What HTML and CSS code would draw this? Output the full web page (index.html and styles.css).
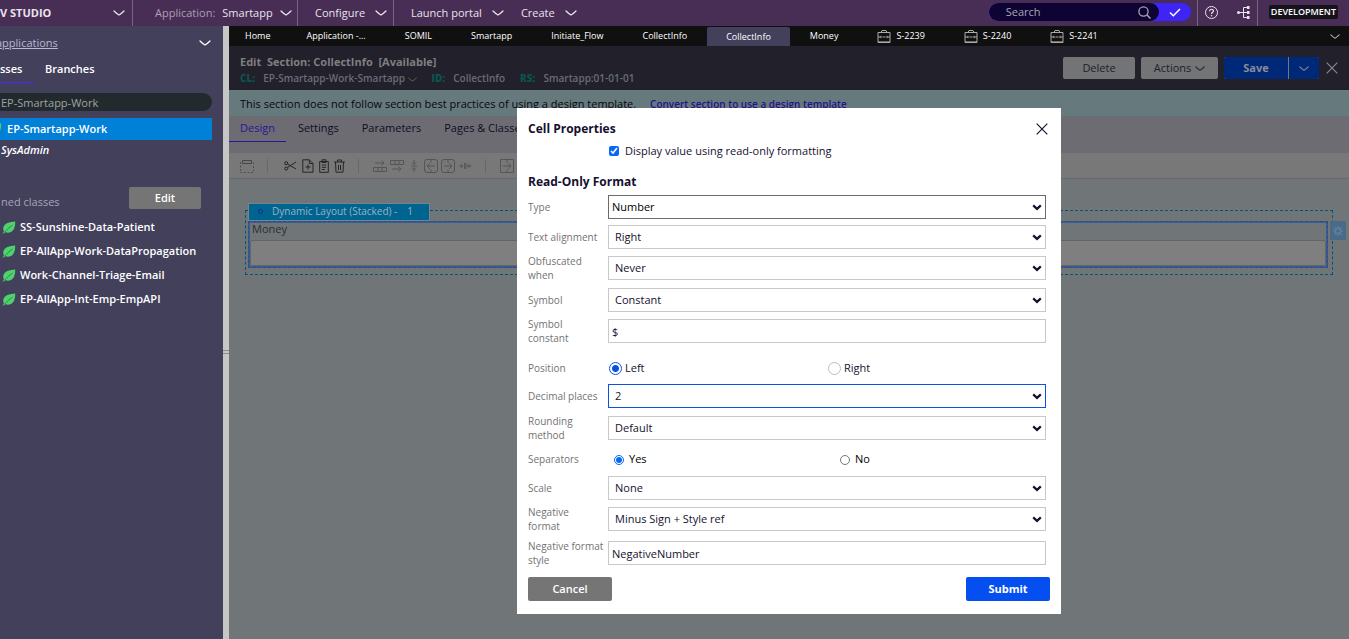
FILE: index.html
```html
<!DOCTYPE html>
<html lang="en">
<head>
<meta charset="utf-8">
<title>Dev Studio</title>
<link rel="stylesheet" href="styles.css">
</head>
<body>
<svg class="sprite" aria-hidden="true">
  <symbol id="chev" viewBox="0 0 12 6"><path d="M1 1c2 2 3 3 5 4c2-1 3-2 5-4" fill="none" stroke="currentColor" stroke-width="1.3" stroke-linecap="round"/></symbol>
  <symbol id="arrow" viewBox="0 0 10 7"><path d="M1.2 1.4L5 4.9l3.8-3.5" fill="none" stroke="currentColor" stroke-width="2.2"/></symbol>
  <symbol id="cross" viewBox="0 0 12 12"><path d="M.7.7l10.600 10.600M11.300.7L.7 11.300" fill="none" stroke="currentColor" stroke-width="1.2"/></symbol>
  <symbol id="case" viewBox="0 0 14 14"><path d="M1 3.500h12v10H1zM4 3.500l1-2h4l1 2M1 8h3m1.500 0h3M10 8h3M4 6.800v2.400M10 6.800v2.400" fill="none" stroke="currentColor"/><path d="M1 12h12v1.500H1z" fill="currentColor" opacity=".6"/></symbol>
  <symbol id="leaf" viewBox="0 0 14 13"><path d="M13.200.5C8 .8 1.500 2 1.200 7.500c0 1.300.3 2.200.8 3L.5 12.500l1-.1L3 11.300c6 1.800 10.500-1.500 10.200-10.800z" fill="#4fd16c"/><path d="M2.500 11.300C5 8.500 7.500 6 10.500 4" fill="none" stroke="#2e7d50" stroke-width=".9"/></symbol>
</svg>
<header class="top">
  <button class="studio">V STUDIO<svg class="chev"><use href="#chev"/></svg></button>
  <button class="app"><span class="muted">Application:</span>Smartapp<svg class="chev"><use href="#chev"/></svg></button>
  <nav class="menu">
    <button class="conf">Configure<svg class="chev"><use href="#chev"/></svg></button>
    <button>Launch portal<svg class="chev"><use href="#chev"/></svg></button>
    <button>Create<svg class="chev"><use href="#chev"/></svg></button>
  </nav>
  <form class="search">
    <label class="field"><input type="text" placeholder="Search" aria-label="Search">
      <svg width="13" height="13" viewBox="0 0 13 13"><circle cx="5.500" cy="5.500" r="4.600" fill="none" stroke="currentColor" stroke-width="1.300"/><path d="M9 9l3.500 3.500" stroke="currentColor" stroke-width="1.500"/></svg></label>
    <button type="button" aria-label="Go"><svg width="12" height="9" viewBox="0 0 12 9"><path d="M1 4.500l3.300 3.300L11 1" fill="none" stroke="#fff" stroke-width="1.500"/></svg></button>
  </form>
  <div class="tools">
    <button aria-label="Help"><svg width="13" height="13" viewBox="0 0 13 13"><g fill="none" stroke="currentColor"><circle cx="6.500" cy="6.500" r="6"/><path d="M4.600 5.200c.1-2.700 3.900-2.500 3.800-.2 0 1.300-1.900 1.400-1.900 3" stroke-width="1.200"/></g><circle cx="6.500" cy="9.700" r=".8" fill="currentColor"/></svg></button>
    <button aria-label="Hierarchy"><svg width="13" height="13" viewBox="0 0 13 13"><path d="M1 6.500h10M11 1.500H6.500v10H11" fill="none" stroke="currentColor"/><g fill="currentColor"><circle cx="1.500" cy="6.500" r="1.500"/><path d="M10 0h2.500v3H10zM10 5h2.500v3H10zM10 10h2.500v3H10z"/></g></svg></button>
  </div>
  <div class="env"><span>DEVELOPMENT</span></div>
</header>
<div class="body">
  <aside class="side">
    <div class="apps"><a href="#">applications</a><svg class="chev"><use href="#chev"/></svg></div>
    <nav class="sidetabs"><a href="#" class="on">sses</a><a href="#">Branches</a></nav>
    <input class="find" type="text" value="EP-Smartapp-Work" aria-label="Find class">
    <a href="#" class="current"><span class="cutleaf"><svg class="leaf"><use href="#leaf"/></svg></span>EP-Smartapp-Work</a>
    <a href="#" class="sys">SysAdmin</a>
    <div class="pinned"><span>ned classes</span><button>Edit</button></div>
    <ul class="classes">
      <li><svg class="leaf"><use href="#leaf"/></svg><a href="#">SS-Sunshine-Data-Patient</a></li>
      <li><svg class="leaf"><use href="#leaf"/></svg><a href="#">EP-AllApp-Work-DataPropagation</a></li>
      <li><svg class="leaf"><use href="#leaf"/></svg><a href="#">Work-Channel-Triage-Email</a></li>
      <li><svg class="leaf"><use href="#leaf"/></svg><a href="#">EP-AllApp-Int-Emp-EmpAPI</a></li>
    </ul>
  </aside>
  <div class="split"><i></i></div>
  <main class="main">
    <nav class="tabs">
      <a href="#">Home</a><a href="#">Application -...</a><a href="#">SOMIL</a><a href="#">Smartapp</a><a href="#">Initiate_Flow</a><a href="#">CollectInfo</a><a href="#" class="on">CollectInfo</a><a href="#">Money</a>
      <a href="#"><svg class="case"><use href="#case"/></svg>S-2239</a>
      <a href="#"><svg class="case"><use href="#case"/></svg>S-2240</a>
      <a href="#"><svg class="case"><use href="#case"/></svg>S-2241</a>
      <button aria-label="More tabs"><svg class="chev small"><use href="#chev"/></svg></button>
    </nav>
    <section class="head">
      <div>
        <h1>Edit&nbsp; Section: CollectInfo&nbsp; <span>[Available]</span></h1>
        <p class="meta"><b>CL:</b><span>EP-Smartapp-Work-Smartapp <svg class="chev tiny"><use href="#chev"/></svg></span><b>ID:</b><span>CollectInfo</span><b>RS:</b><span>Smartapp:01-01-01</span></p>
      </div>
      <div class="actions">
        <button>Delete</button>
        <button class="wide">Actions<svg class="chev small"><use href="#chev"/></svg></button>
        <div class="save"><button>Save</button><button class="more" aria-label="More save options"><svg class="chev small"><use href="#chev"/></svg></button></div>
        <button class="x" aria-label="Close"><svg class="cross"><use href="#cross"/></svg></button>
      </div>
    </section>
    <p class="banner">This section does not follow section best practices of using a design template. <a href="#">Convert section to use a design template</a></p>
    <nav class="subtabs"><a href="#" class="on">Design</a><a href="#">Settings</a><a href="#">Parameters</a><a href="#">Pages &amp; Classes</a></nav>
    <div class="bar">
      <div class="set"><svg width="14" height="14" viewBox="0 0 14 14"><path d="M2.500 1.500h9v3h-9z" fill="none" stroke="#454545"/><path d="M.5 3v10.500h13V3" fill="none" stroke="#505050" stroke-dasharray="2 1.500"/></svg></div>
      <div class="set dark">
        <svg width="13" height="14" viewBox="0 0 13 14"><g fill="none" stroke="currentColor"><path d="M12 3L3.500 8.500M12 10L3.500 5"/><circle cx="2.200" cy="4.200" r="1.500"/><circle cx="2.200" cy="9.500" r="1.500"/></g></svg>
        <svg width="12" height="14" viewBox="0 0 12 14"><path d="M.8.8h6.500l3.700 3.700v8.700H.8zM7.300.8v3.700H11M3.500 8h5M6 5.500v5" fill="none" stroke="currentColor"/></svg>
        <svg width="10" height="14" viewBox="0 0 10 14"><path d="M.7 2.500h8.600v10.800H.7zM3 .8h4v2.700H3zM2.800 6h4.400M2.800 8.300h4.400M2.800 10.500h3" fill="none" stroke="currentColor"/></svg>
        <svg width="11" height="14" viewBox="0 0 11 14"><path d="M0 3h11M3.500 3V1h4v2M1.500 3l.5 10.200h7L9.500 3M4.500 6v5M6.500 6v5" fill="none" stroke="currentColor"/></svg>
      </div>
      <div class="set">
        <svg width="14" height="14" viewBox="0 0 14 14"><path d="M2 4h9M8.500 1.500L11 4 8.500 6.500M.5 8.500h13v4H.5zM5 8.500v4M9 8.500v4" fill="none" stroke="currentColor"/></svg>
        <svg width="14" height="14" viewBox="0 0 14 14"><path d="M.5 1.500h13v4H.5zM5 1.500v4M9 1.500v4M2 10h9M8.500 7.500L11 10l-2.500 2.500" fill="none" stroke="currentColor"/></svg>
        <svg width="14" height="14" viewBox="0 0 14 14"><path d="M7 1v4M5 3.500l2 2 2-2M4 7h6M7 13V9M5 10.500l2-2 2 2" fill="none" stroke="currentColor"/></svg>
        <svg width="14" height="14" viewBox="0 0 14 14"><path d="M7 .5H3a2.500 2.500 0 0 0-2.500 2.500v8A2.500 2.500 0 0 0 3 13.500h8a2.500 2.500 0 0 0 2.500-2.500V3A2.500 2.500 0 0 0 11 .5H7zm0 0v3m0 7v3M11 7H3m3-3L3 7l3 3" fill="none" stroke="currentColor"/></svg>
        <svg width="14" height="14" viewBox="0 0 14 14"><path d="M7 .5H3a2.500 2.500 0 0 0-2.500 2.500v8A2.500 2.500 0 0 0 3 13.500h8a2.500 2.500 0 0 0 2.500-2.500V3A2.500 2.500 0 0 0 11 .5H7zm0 0v3m0 7v3M3 7h8M8 4l3 3-3 3" fill="none" stroke="currentColor"/></svg>
        <svg width="14" height="14" viewBox="0 0 14 14"><path d="M1 7h4M3 5l2 2-2 2M6.500 4v6M8 4v6M13.500 7h-4M11.500 5l-2 2 2 2" fill="none" stroke="currentColor"/></svg>
      </div>
      <div class="set">
        <svg width="14" height="14" viewBox="0 0 14 14"><path d="M7 .5H.5v13h13V.5H7zm0 0v3m0 7v3M3 7h8M8 4l3 3-3 3" fill="none" stroke="currentColor"/></svg>
        <svg width="14" height="14" viewBox="0 0 14 14"><path d="M7 .5H.5v13h13V.5H7zM.5 7h13" fill="none" stroke="currentColor"/></svg>
      </div>
    </div>
    <section class="canvas">
      <div class="layout">
        <div class="tag"><i></i><span>Dynamic Layout (Stacked) -</span><span>1</span></div>
        <div class="cell"><label for="money">Money</label><input id="money" type="text"></div>
        <button class="gear" aria-label="Cell settings"><svg width="10" height="10" viewBox="0 0 10 10"><circle cx="5" cy="5" r="2.600" fill="none" stroke="currentColor" stroke-width="1.700"/><path d="M5 0v2M5 8v2M0 5h2M8 5h2M1.500 1.500l1.400 1.400M7.100 7.100l1.400 1.400M8.500 1.500L7.100 2.900M2.900 7.100L1.500 8.500" stroke="currentColor" stroke-width="1.500"/></svg></button>
      </div>
    </section>
    <div class="overlay">
      <form class="dialog" role="dialog" aria-labelledby="dt">
        <div class="dhead"><h2 id="dt">Cell Properties</h2><button type="button" aria-label="Close dialog"><svg class="cross"><use href="#cross"/></svg></button></div>
        <label class="check"><input type="checkbox" checked>Display value using read-only formatting</label>
        <h2 class="sub">Read-Only Format</h2>
        <div class="row"><label for="type">Type</label><div class="sel plain"><select id="type"><option>Number</option></select><svg><use href="#arrow"/></svg></div></div>
        <div class="row"><label for="align">Text alignment</label><div class="sel"><select id="align"><option>Right</option></select><svg><use href="#arrow"/></svg></div></div>
        <div class="row tall"><label for="obf">Obfuscated when</label><div class="sel"><select id="obf"><option>Never</option></select><svg><use href="#arrow"/></svg></div></div>
        <div class="row tall"><label for="sym">Symbol</label><div class="sel"><select id="sym"><option>Constant</option></select><svg><use href="#arrow"/></svg></div></div>
        <div class="row"><label for="symc" class="narrow">Symbol constant</label><input id="symc" type="text" value="$"></div>
        <div class="row position"><span>Position</span><div class="radios big"><label><input type="radio" name="pos" checked>Left</label><label><input type="radio" name="pos">Right</label></div></div>
        <div class="row tall"><label for="dec">Decimal places</label><div class="sel focus"><select id="dec"><option>2</option></select><svg><use href="#arrow"/></svg></div></div>
        <div class="row tall"><label for="rnd" class="narrow">Rounding method</label><div class="sel"><select id="rnd"><option>Default</option></select><svg><use href="#arrow"/></svg></div></div>
        <div class="row short"><span>Separators</span><div class="radios seps"><label><input type="radio" name="sep" checked>Yes</label><label><input type="radio" name="sep">No</label></div></div>
        <div class="row"><label for="scale">Scale</label><div class="sel"><select id="scale"><option>None</option></select><svg><use href="#arrow"/></svg></div></div>
        <div class="row tall"><label for="neg" class="narrow">Negative format</label><div class="sel"><select id="neg"><option>Minus Sign + Style ref</option></select><svg><use href="#arrow"/></svg></div></div>
        <div class="row last"><label for="negs">Negative format style</label><input id="negs" type="text" value="NegativeNumber"></div>
        <div class="foot"><button type="button" class="cancel">Cancel</button><button type="button" class="submit">Submit</button></div>
      </form>
    </div>
  </main>
</div>
</body>
</html>
```
FILE: styles.css
```css
* { box-sizing: border-box; }
html, body { height: 100%; }
body { margin: 0; display: flex; flex-direction: column; overflow: hidden; font: 11px/16px "Open Sans", "Noto Sans", sans-serif; color: #fff; background: #42405b; }
h1, h2, p, ul { margin: 0; padding: 0; }
button, input, select { font: inherit; color: inherit; margin: 0; }
button { border: 0; padding: 0; background: none; white-space: nowrap; }
a { color: inherit; text-decoration: none; }
svg { display: block; flex: none; }
.sprite { position: absolute; width: 0; height: 0; }
.chev { width: 12px; height: 6px; }
.chev.small { width: 10px; height: 5px; }
.chev.tiny { width: 9px; height: 5px; display: inline-block; vertical-align: middle; }
.cross { width: 12px; height: 12px; }
.leaf { width: 14px; height: 13px; }
.case { width: 14px; height: 14px; color: #aaa; }

.top { display: flex; flex: none; height: 26px; background: #482d55; color: #e9e4ec; }
.top button { display: flex; align-items: center; gap: 8px; }
.studio { flex: none; width: 133px; justify-content: space-between; font-weight: 700; border-right: 1px solid #7a6485; }
.top .studio { padding-right: 7px; }
.top .app { width: 165px; padding-left: 22px; gap: 7px; font-weight: 500; border-right: 1px solid #7a6485; }
.muted { color: #ad9fb5; font-weight: 400; }
.menu { display: flex; }
.menu button { padding-left: 17px; gap: 10px; font-weight: 500; }
.top .menu .conf { width: 96px; padding: 0 8px 0 17px; border-right: 1px solid #7a6485; }
.search { display: flex; margin: 3px 0 5px auto; border-radius: 9px; overflow: hidden; background: #3e25f5; }
.field { display: flex; align-items: center; justify-content: space-between; width: 170px; padding: 0 8px 0 17px; border-radius: 9px; background: #0d0433; color: #a9a3b8; }
.field input { width: 110px; padding: 0; border: 0; background: none; outline: 0; }
.field input::placeholder { color: #a9a3b8; opacity: 1; }
.search button { width: 32px; justify-content: center; }
.tools { display: flex; width: 61px; margin-left: 6px; padding: 0 7px 2px; justify-content: space-between; border: solid #7a6485; border-width: 0 1px; }
.env { display: flex; align-items: center; padding: 0 11px 2px; }
.env span { padding: 0 2px; line-height: 14px; border-radius: 2px; background: #17131c; color: #fff; font-size: 9px; font-weight: 600; }

.body { display: flex; flex: 1; min-height: 0; }
.side { flex: none; width: 223px; overflow: hidden; background: #42405b; }
.apps { display: flex; align-items: center; justify-content: space-between; height: 33px; padding-right: 12px; color: #b9b9cf; }
.apps a { margin-left: -4px; text-decoration: underline; }
.apps svg { color: #fff; }
.sidetabs { display: flex; gap: 11px; margin-bottom: 10px; font-weight: 600; }
.sidetabs a { height: 24px; padding-top: 2px; }
.sidetabs .on { width: 34px; border-bottom: 1px solid #4a2bf5; }
.find { display: block; width: 212px; height: 18px; padding: 0 1px; border: 0; border-radius: 0 9px 9px 0; background: #222a2d; color: #a0a3a5; }
.current { display: flex; align-items: center; width: 212px; height: 22px; margin-top: 7px; background: #0080d6; font-weight: 600; }
.cutleaf { display: flex; justify-content: flex-end; width: 2px; margin-right: 5px; overflow: hidden; }
.sys { display: block; margin-top: 2px; padding-left: 1px; font-style: italic; font-weight: 600; }
.pinned { display: flex; justify-content: space-between; align-items: flex-end; margin-top: 29px; padding: 0 22px 0 1px; color: #a6a6b8; }
.pinned span { margin-bottom: -1px; }
.pinned button { width: 72px; height: 22px; border-radius: 2px; background: #757575; color: #fff; font-weight: 600; }
.classes { list-style: none; margin-top: 6px; font-weight: 600; }
.classes li { display: flex; align-items: center; gap: 4px; height: 24px; padding-left: 2px; white-space: nowrap; }
.split { display: flex; flex: none; width: 6px; align-items: center; background: #c6c6c6; }
.split i { width: 6px; height: 4px; margin-top: 39px; border: solid #8c8c8c; border-width: 1px 0; }

.main { position: relative; display: flex; flex: 1; flex-direction: column; min-width: 0; }
.tabs { display: flex; flex: none; gap: 1px; height: 20px; background: #101010; font-size: 9px; font-weight: 500; }
.tabs a { display: flex; align-items: center; gap: 5px; padding: 0 19px; white-space: nowrap; }
.tabs a:first-child { padding: 0 16px; }
.tabs .on { margin-top: 1px; border-radius: 2px 2px 0 0; background: #42405b; }
.tabs button { margin-left: auto; padding-right: 9px; color: #aaa; }
.head { display: flex; flex: none; justify-content: space-between; height: 44px; padding: 7px 10px 0 11px; background: #21202b; }
h1 { font-size: 11px; line-height: 17px; color: #7f7f80; }
.meta { display: flex; gap: 8px; font-size: 10px; line-height: 16px; font-weight: 600; color: #6a6c76; }
.meta b { color: #0d5250; }
.meta span + b { margin-left: 7px; }
.actions { display: flex; gap: 6px; height: 22px; margin-top: 4px; color: #20202e; }
.actions button { width: 72px; border-radius: 2px; background: #737476; }
.actions .wide { display: flex; width: 77px; gap: 4px; align-items: center; justify-content: center; }
.save { display: flex; gap: 1px; border-radius: 2px; background: #777; overflow: hidden; }
.actions .save button { display: grid; place-content: center; width: 64px; border-radius: 0; background: #002879; color: #8a8c98; font-weight: 700; }
.actions .save .more { width: 30px; }
.actions .x { width: 14px; padding-left: 1px; background: none; color: #88888d; }
.banner { flex: none; height: 26px; padding: 6px 11px; background: #66797d; color: #08080c; white-space: nowrap; overflow: hidden; }
.banner a { margin-left: 11px; color: #24138a; text-decoration: underline; font-size: 10px; font-weight: 600; }
.subtabs { display: flex; flex: none; gap: 1px; height: 37px; background: #6d6c72; color: #100c25; white-space: nowrap; font-weight: 500; }
.subtabs a { height: 26px; padding: 4px 11px; }
.subtabs .on { color: #2b1496; border-bottom: 1px solid #2b1496; }
.bar { display: flex; flex: none; align-items: center; height: 26px; padding-left: 11px; background: #787878; border-bottom: 1px solid #686868; color: #555; }
.set { display: flex; align-items: center; gap: 3px; }
.set + .set { margin-left: 13px; padding-left: 14px; border-left: 1px solid #686868; }
.bar .dark { gap: 5px; padding-left: 16px; color: #262626; }
.canvas { flex: 1; padding: 31px 16px; background: #707577; }
.layout { position: relative; padding: 10px 4px 6px 2px; border: 1px dashed #005379; }
.tag { position: absolute; top: -8px; left: 2px; display: flex; align-items: center; width: 182px; height: 18px; padding: 0 0 2px 9px; border: 1px solid #74858d; background: #006490; color: #9bb2bf; font-size: 10px; gap: 10px; }
.tag i { width: 5px; height: 5px; margin-right: -1px; border: 1px solid #132c91; border-radius: 50%; }
.cell { border: 2px solid #3a5c92; outline: 1px dashed #2f4f80; outline-offset: -1px; color: #2b2f35; }
.cell label { display: block; height: 17px; padding-left: 2px; line-height: 12px; }
.cell input { display: block; width: 100%; height: 26px; border: 1px solid #626567; border-radius: 2px; background: #7f7f7f; }
.gear { position: absolute; top: 10px; right: -14px; display: grid; place-content: center; width: 16px; height: 19px; background: #4a6b86; color: #597e9e; }

.overlay { position: absolute; inset: 0; display: flex; justify-content: center; align-items: flex-start; padding-top: 82px; }
.dialog { width: 544px; padding: 13px 15px 13px 11px; background: #fff; color: #15112f; }
.dhead { display: flex; justify-content: space-between; align-items: center; height: 16px; margin-right: -2px; }
h2 { font-size: 12px; line-height: 16px; font-weight: 700; }
.check { display: flex; align-items: center; width: max-content; height: 16px; margin: 6px 0 0 81px; gap: 6px; }
.check input { width: 10px; height: 10px; accent-color: #0768f5; }
.sub { margin: 15px 0 2px; }
.row { display: grid; grid-template-columns: 80px 1fr; align-items: center; height: 30px; line-height: 14px; }
.row > label, .row > span { color: #737373; font-size: 10px; }
.row > .narrow { padding-right: 24px; }
.tall { height: 32px; }
.short { height: 29px; }
.position { height: 34px; padding-top: 10px; }
.last { height: 36px; }
.sel { position: relative; }
.sel svg { position: absolute; right: 4px; top: 9px; width: 10px; height: 7px; pointer-events: none; }
.row select, .row > input { display: block; width: 100%; height: 24px; padding: 0 6px; border: 1px solid #c8c8c8; border-radius: 0; background: #fff; appearance: none; outline: 0; }
.row > input { padding: 0 3px; }
.row .plain select { padding: 0 3px; border-color: #6b6b6b; color: #000; font-weight: 500; }
.row .focus select { border-color: #0b50e4; }
.radios { display: grid; grid-template-columns: 219px 1fr; }
.radios label { display: flex; align-items: center; gap: 3px; }
.big input { appearance: none; width: 13px; height: 13px; margin-left: 1px; border: 1px solid #bdbdbd; border-radius: 50%; }
.big input:checked { border-color: #0b50e4; background: radial-gradient(circle, #0b50e4 3px, #fff 4px); }
.seps { grid-template-columns: 226px 1fr; color: #000; }
.seps label { gap: 5px; padding-left: 6px; }
.seps input { width: 10px; height: 10px; margin-top: 3px; accent-color: #0768f5; }
.foot { display: flex; justify-content: space-between; margin: 6px -4px 0 0; }
.foot button { width: 84px; height: 24px; border-radius: 2px; color: #fff; font-weight: 600; }
.cancel { background: #757575; }
.foot .submit { background: #054ff0; font-weight: 700; }
```
